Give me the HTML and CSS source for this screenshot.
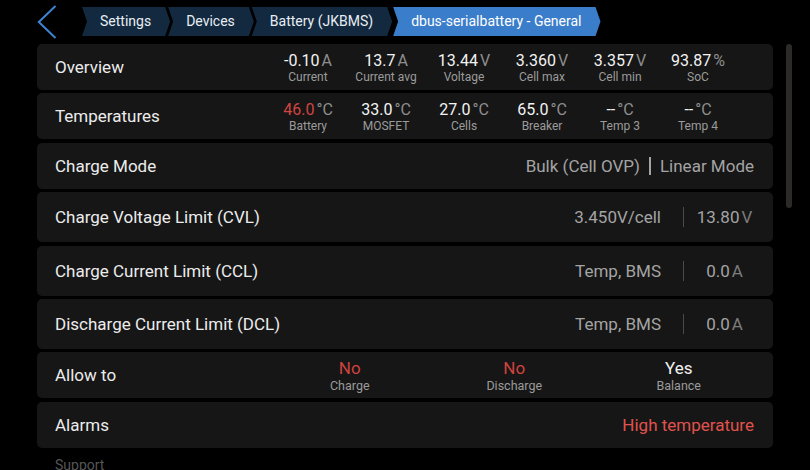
FILE: index.html
```html
<!DOCTYPE html>
<html lang="en">
<head>
<meta charset="utf-8">
<title>dbus-serialbattery - General</title>
<link rel="stylesheet" href="styles.css">
</head>
<body>
<div class="screen">
  <header class="topbar">
    <svg class="back" width="20" height="34" viewBox="0 0 20 34" aria-hidden="true">
      <polyline points="18.5,1 1.8,17 18.5,33" fill="none" stroke="#3c83d3" stroke-width="2"/>
    </svg>
    <nav class="crumbs">
      <span class="crumb">Settings</span>
      <span class="crumb">Devices</span>
      <span class="crumb">Battery (JKBMS)</span>
      <span class="crumb active">dbus-serialbattery - General</span>
    </nav>
  </header>

  <div class="content">
    <div class="list">
      <div class="row">
        <div class="label">Overview</div>
        <div class="metrics">
          <div class="metric"><div class="v">-0.10<span class="u">A</span></div><div class="l">Current</div></div>
          <div class="metric"><div class="v">13.7<span class="u">A</span></div><div class="l">Current avg</div></div>
          <div class="metric"><div class="v">13.44<span class="u">V</span></div><div class="l">Voltage</div></div>
          <div class="metric"><div class="v">3.360<span class="u">V</span></div><div class="l">Cell max</div></div>
          <div class="metric"><div class="v">3.357<span class="u">V</span></div><div class="l">Cell min</div></div>
          <div class="metric"><div class="v">93.87<span class="u">%</span></div><div class="l">SoC</div></div>
        </div>
      </div>

      <div class="row">
        <div class="label">Temperatures</div>
        <div class="metrics">
          <div class="metric"><div class="v"><span class="red">46.0</span><span class="u">°C</span></div><div class="l">Battery</div></div>
          <div class="metric"><div class="v">33.0<span class="u">°C</span></div><div class="l">MOSFET</div></div>
          <div class="metric"><div class="v">27.0<span class="u">°C</span></div><div class="l">Cells</div></div>
          <div class="metric"><div class="v">65.0<span class="u">°C</span></div><div class="l">Breaker</div></div>
          <div class="metric"><div class="v">--<span class="u">°C</span></div><div class="l">Temp 3</div></div>
          <div class="metric"><div class="v">--<span class="u">°C</span></div><div class="l">Temp 4</div></div>
        </div>
      </div>

      <div class="row">
        <div class="label">Charge Mode</div>
        <div class="mode">
          <span class="grey">Bulk (Cell OVP)</span>
          <span class="bar"></span>
          <span class="grey">Linear Mode</span>
        </div>
      </div>

      <div class="row tall limit">
        <div class="label">Charge Voltage Limit (CVL)</div>
        <span class="grey">3.450V/cell</span>
        <span class="sep"></span>
        <span class="limit-val">13.80<span class="u">V</span></span>
      </div>

      <div class="row tall limit">
        <div class="label">Charge Current Limit (CCL)</div>
        <span class="grey">Temp, BMS</span>
        <span class="sep"></span>
        <span class="limit-val">0.0<span class="u">A</span></span>
      </div>

      <div class="row tall limit">
        <div class="label">Discharge Current Limit (DCL)</div>
        <span class="grey">Temp, BMS</span>
        <span class="sep"></span>
        <span class="limit-val">0.0<span class="u">A</span></span>
      </div>

      <div class="row allow-row">
        <div class="label">Allow to</div>
        <div class="allow">
          <div class="flag"><div class="fv red">No</div><div class="fl">Charge</div></div>
          <div class="flag"><div class="fv red">No</div><div class="fl">Discharge</div></div>
          <div class="flag"><div class="fv">Yes</div><div class="fl">Balance</div></div>
        </div>
      </div>

      <div class="row">
        <div class="label">Alarms</div>
        <span class="alarm">High temperature</span>
      </div>

      <div class="section">Support</div>
    </div>
    <div class="scrollbar"></div>
  </div>
</div>
</body>
</html>
```
FILE: styles.css
```css
html, body {
  margin: 0;
  padding: 0;
  background: #000;
  overflow: hidden;
}

body {
  font-family: Roboto, "Liberation Sans", sans-serif;
  color: #ececec;
}

.screen {
  width: 810px;
  height: 470px;
  overflow: hidden;
}

/* ---------- top bar ---------- */
.topbar {
  height: 43px;
  display: flex;
  align-items: center;
  padding-left: 37px;
  box-sizing: border-box;
}

.back {
  display: block;
  flex: none;
}

.crumbs {
  display: flex;
  margin-left: 25px;
  margin-top: 0;
}

.crumb {
  height: 29px;
  line-height: 29px;
  font-size: 14px;
  color: #e9eef4;
  background: #12293f;
  padding: 0 19px 0 18px;
  white-space: nowrap;
  clip-path: polygon(0 0, calc(100% - 5px) 0, 100% 50%, calc(100% - 5px) 100%, 0 100%, 5px 50%);
}

.crumb + .crumb {
  margin-left: -2px;
}

.crumb.active {
  background: #3a7dca;
  color: #fff;
  margin-left: 1px;
}

/* ---------- content ---------- */
.content {
  display: flex;
  align-items: flex-start;
  padding-left: 37px;
  margin-top: 1px;
}

.list {
  width: 736px;
  display: flex;
  flex-direction: column;
  gap: 3.4px;
}

.scrollbar {
  width: 6px;
  height: 164px;
  margin-left: 13px;
  border-radius: 3px;
  background: #2b2a26;
}

.row {
  height: 46px;
  box-sizing: border-box;
  background: #161616;
  border-radius: 5px;
  display: flex;
  align-items: center;
  padding: 0 19px 0 18px;
  font-size: 17px;
}

.row.tall {
  height: 50px;
}

.label {
  flex: 1;
  color: #ececec;
  white-space: nowrap;
}

.red {
  color: #d0453f;
}

.grey {
  color: #a4a4a4;
  white-space: nowrap;
}

.u {
  color: #8e8e8e;
  margin-left: 2px;
}

/* overview / temperature metrics */
.metrics {
  display: flex;
  margin-right: 17px;
}

.metric {
  width: 78px;
  text-align: center;
}

.v {
  font-size: 16px;
  line-height: 19px;
  color: #f2f2f2;
  white-space: nowrap;
}

.l {
  font-size: 12px;
  line-height: 14px;
  color: #9b9b9b;
  white-space: nowrap;
}

/* charge mode */
.mode {
  display: flex;
  align-items: center;
}

.bar {
  width: 2px;
  height: 18px;
  background: #a4a4a4;
  margin: 0 9px;
}

/* limits */
.row.limit {
  padding-right: 8px;
}

.sep {
  width: 1px;
  height: 20px;
  background: #4a4a4a;
  margin-left: 22px;
}

.limit-val {
  width: 81px;
  text-align: center;
  color: #a4a4a4;
  white-space: nowrap;
}

.limit-val .u {
  color: #7c7c7c;
}

/* allow to */
.row.allow-row {
  padding-right: 12px;
}

.allow {
  display: flex;
}

.flag {
  width: 164.5px;
  text-align: center;
}

.fv {
  font-size: 17px;
  line-height: 20px;
  color: #f2f2f2;
}

.fv.red {
  color: #cf433d;
}

.fl {
  font-size: 12.5px;
  line-height: 15px;
  color: #9b9b9b;
}

/* alarms */
.alarm {
  color: #e0524d;
  white-space: nowrap;
}

.section {
  font-size: 14px;
  line-height: 17px;
  color: #555;
  padding-left: 18px;
  margin-top: 6px;
}
```
